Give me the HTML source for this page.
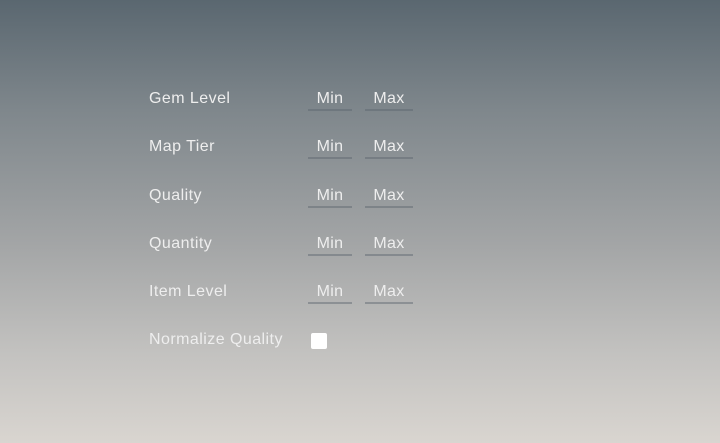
<!DOCTYPE html>
<html><head><style>
html,body{margin:0;padding:0}
body{width:720px;height:443px;overflow:hidden;position:relative;font-family:"Liberation Sans",sans-serif;
background:linear-gradient(to bottom,#5a6770 0%,#7f878c 25%,#a3a5a6 55%,#c3c2c0 80%,#d9d5d0 100%);color:#eeeeee}
.l{position:absolute;left:149px;font-size:16px;line-height:20px;letter-spacing:0.45px}
.i{position:absolute;font-size:16px;line-height:20px;text-align:center;border-bottom:2px solid rgba(90,100,108,.45);height:20px;padding-top:2px;letter-spacing:0.3px}
.mn{left:308px;width:44px}
.mx{left:365px;width:48px}
.cb{position:absolute;left:311px;top:333px;width:16px;height:16px;background:#fff;border-radius:2px}
</style></head><body>
<div class="l" style="top:89px">Gem Level</div><div class="i mn" style="top:87px">Min</div><div class="i mx" style="top:87px">Max</div>
<div class="l" style="top:137px">Map Tier</div><div class="i mn" style="top:135px">Min</div><div class="i mx" style="top:135px">Max</div>
<div class="l" style="top:186px">Quality</div><div class="i mn" style="top:184px">Min</div><div class="i mx" style="top:184px">Max</div>
<div class="l" style="top:234px">Quantity</div><div class="i mn" style="top:232px">Min</div><div class="i mx" style="top:232px">Max</div>
<div class="l" style="top:282px">Item Level</div><div class="i mn" style="top:280px">Min</div><div class="i mx" style="top:280px">Max</div>
<div class="l" style="top:330px">Normalize Quality</div><div class="cb"></div>
</body></html>
